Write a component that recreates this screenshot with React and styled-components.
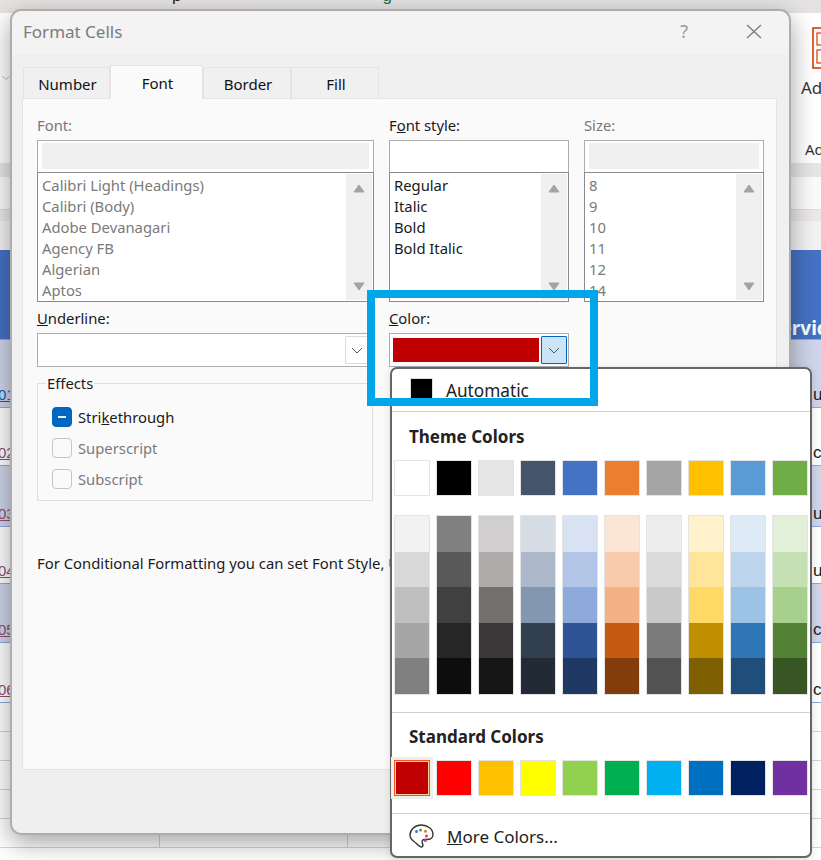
import React from 'react';
import styled, { createGlobalStyle } from 'styled-components';

const GlobalStyle = createGlobalStyle`
  html, body { margin: 0; padding: 0; background: #fff; }
  * { box-sizing: border-box; }
`;

const UI_FONT = `"Noto Sans", "Open Sans", sans-serif`;

const themeTop = ['#ffffff', '#000000', '#e7e6e6', '#44546a', '#4472c4', '#ed7d31', '#a5a5a5', '#ffc000', '#5b9bd5', '#70ad47'];
const themeShades = [
  ['#f2f2f2', '#d9d9d9', '#bfbfbf', '#a6a6a6', '#808080'],
  ['#808080', '#595959', '#404040', '#262626', '#0d0d0d'],
  ['#d0cece', '#aeabab', '#757070', '#3a3838', '#171616'],
  ['#d6dce4', '#adb9ca', '#8497b0', '#323f4f', '#222b35'],
  ['#d9e2f3', '#b4c6e7', '#8eaadb', '#2f5496', '#1f3864'],
  ['#fbe5d5', '#f7cbac', '#f4b183', '#c55a11', '#833c0b'],
  ['#ededed', '#dbdbdb', '#c9c9c9', '#7b7b7b', '#525252'],
  ['#fff2cc', '#fee599', '#ffd965', '#bf8f00', '#7f6000'],
  ['#deeaf6', '#bdd6ee', '#9cc3e5', '#2e75b5', '#1e4e79'],
  ['#e2efd9', '#c5e0b3', '#a8d08d', '#538135', '#375623'],
];
const standard = ['#c00000', '#ff0000', '#ffc000', '#ffff00', '#92d050', '#00b050', '#00b0f0', '#0070c0', '#002060', '#7030a0'];

const tableRows = [
  { h: 68, left: '01', right: 'u', shaded: true, visited: false },
  { h: 58, left: '02', right: 'c', shaded: false, visited: true },
  { h: 61, left: '03', right: 'u', shaded: true, visited: true },
  { h: 57, left: '04', right: 'u', shaded: false, visited: true },
  { h: 59, left: '05', right: 'c', shaded: true, visited: true },
  { h: 60, left: '06', right: 'c', shaded: false, visited: true },
];

const Page = styled.div`
  position: relative;
  width: 821px;
  height: 860px;
  overflow: hidden;
  font-family: ${UI_FONT};
  background: #fff;
`;

/* the workbook behind the dialog */
const Sheet = styled.div`
  display: flex;
  flex-direction: column;
  height: 860px;
`;

const TopStrip = styled.div`
  display: flex;
  height: 13px;
  overflow: hidden;
  background: linear-gradient(90deg, #e6e3e1, #e4e2e4);
  font-family: "Liberation Sans", sans-serif;
  font-size: 17px;
  line-height: 20px;
`;

const CutText = styled.span`
  margin-top: -14px;
  margin-left: ${p => p.$left}px;
  color: ${p => p.$color};
`;

const Ribbon = styled.div`
  display: flex;
  justify-content: space-between;
  height: 150px;
  background: #fff;
`;

const RibbonChevron = styled.svg`
  margin: 62px 0 0 2px;
  width: 8px;
  height: 6px;
`;

const RibbonTool = styled.div`
  display: flex;
  flex-direction: column;
  width: 20px;
  padding-top: 14px;
  font-size: 17px;
  line-height: 22px;
  color: #333;
  overflow: hidden;
`;

const RibbonIcon = styled.svg`
  margin-left: 11px;
  width: 9px;
  height: 42px;
  flex: none;
`;

const RibbonCaption = styled.span`
  margin-top: ${p => p.$top}px;
  padding-left: ${p => p.$indent}px;
  font-size: ${p => p.$size}px;
  white-space: nowrap;
`;

const Band = styled.div`
  height: ${p => p.$h}px;
  background: ${p => p.$bg};
  border-bottom: ${p => p.$line ? `1px solid ${p.$line}` : 'none'};
`;

const HeaderRow = styled.div`
  display: flex;
  justify-content: flex-end;
  align-items: flex-end;
  height: 90px;
  background: #4472c4;
  border-bottom: 1px solid #8eaadb;
`;

const HeaderText = styled.div`
  width: 51px;
  font-size: 19px;
  line-height: 22px;
  font-weight: 700;
  color: #fff;
  white-space: nowrap;
`;

const TableRow = styled.div`
  display: flex;
  justify-content: space-between;
  align-items: flex-end;
  height: ${p => p.$h}px;
  padding-bottom: 2px;
  background: ${p => p.$shaded ? '#cfd5ea' : '#fff'};
  border-bottom: 1px solid #8eaadb;
  font-family: "Liberation Sans", sans-serif;
  font-size: 15px;
  line-height: 20px;
`;

const LinkText = styled.span`
  margin-left: -2px;
  color: ${p => p.$visited ? '#954f72' : '#0563c1'};
  text-decoration: underline;
`;

const RowEnd = styled.span`
  width: 8px;
  font-size: 17px;
  color: #222;
  overflow: hidden;
`;

const GridRow = styled.div`
  display: grid;
  grid-template-columns: 160px 188px 1fr;
  height: 29px;
  border-bottom: 1px solid #d4d4d4;
`;

const GridCell = styled.div`
  border-right: 1px solid #d4d4d4;
`;

/* dialog window */
const Dialog = styled.div`
  position: absolute;
  left: 10px;
  top: 9px;
  width: 781px;
  height: 826px;
  display: flex;
  flex-direction: column;
  border: 2px solid #adadad;
  border-radius: 11px;
  background: linear-gradient(180deg, #f3f3f3 0, #f3f3f3 43px, #f0f0f0 43px, #efefef 100%);
  box-shadow: 0 8px 26px rgba(0, 0, 0, 0.36);
  color: #1a1a1a;
`;

const TitleBar = styled.div`
  display: flex;
  align-items: center;
  height: 43px;
  padding: 0 27px 3px 11px;
`;

const Title = styled.div`
  flex: 1;
  font-size: 17px;
  color: #7b7b7b;
`;

const HelpMark = styled.span`
  margin-right: 58px;
  font-size: 18px;
  color: #9a9a9a;
`;

const CloseIcon = styled.svg`
  width: 16px;
  height: 15px;
`;

const DialogBody = styled.div`
  display: flex;
  flex-direction: column;
  padding: 11px 12px 0 10px;
`;

const TabStrip = styled.div`
  display: flex;
  align-items: flex-end;
  height: 34px;
  margin-bottom: -1px;
  padding-left: 1px;
  position: relative;
  z-index: 1;
`;

const Tab = styled.div`
  display: flex;
  align-items: center;
  justify-content: center;
  width: ${p => p.$w}px;
  height: ${p => p.$active ? 34 : 32}px;
  padding: 1px 0 0 2px;
  font-size: 15px;
  color: #111;
  background: ${p => p.$active ? '#fafafa' : '#f0f0f0'};
  border: 1px solid #e4e4e4;
  border-bottom: ${p => p.$active ? '1px solid #fafafa' : '1px solid #e4e4e4'};
`;

const Panel = styled.div`
  height: 672px;
  padding: 16px 0 0 14px;
  background: #fafafa;
  border: 1px solid #e4e4e4;
  overflow: hidden;
`;

const FieldGrid = styled.div`
  display: grid;
  grid-template-columns: 337px 180px 180px;
  column-gap: 15px;
`;

const Label = styled.div`
  height: ${p => p.$h || 25}px;
  font-size: 14.8px;
  line-height: 20px;
  color: ${p => p.$muted ? '#777' : '#1a1a1a'};
  white-space: nowrap;
`;

const Key = styled.span`
  text-decoration: underline;
`;

const FieldBlock = styled.div`
  display: flex;
  flex-direction: column;
`;

const InputBox = styled.div`
  height: 32px;
  padding: 2px 4px;
  background: #fff;
  border: 1px solid #adadad;
  border-bottom: 0;
`;

const InputFill = styled.div`
  height: 26px;
  background: ${p => p.$disabled ? '#f0f0f0' : '#fff'};
`;

const ListBox = styled.div`
  display: flex;
  height: 130px;
  padding: 1px 1px 1px 4px;
  background: #fff;
  border: 1px solid #8a8a94;
`;

const ListItems = styled.div`
  flex: 1;
  padding-top: 1px;
  overflow: hidden;
`;

const ListItem = styled.div`
  font-size: 14.8px;
  line-height: 21px;
  color: ${p => p.$muted ? '#7a7a7a' : '#1a1a1a'};
  white-space: nowrap;
`;

const ScrollTrack = styled.div`
  display: flex;
  flex-direction: column;
  align-items: center;
  justify-content: space-between;
  width: 26px;
  padding: 10px 0 9px;
  background: #f0f0f0;
`;

const ScrollArrow = styled.svg`
  width: 12px;
  height: 9px;
`;

const SecondRow = styled(FieldGrid)`
  margin-top: 6px;
`;

const ComboBox = styled.div`
  display: flex;
  align-items: center;
  justify-content: flex-end;
  height: 34px;
  padding: 0 1px 0 3px;
  width: ${p => p.$w}px;
  background: #fff;
  border: 1px solid #adadad;
`;

const ColorBar = styled.div`
  flex: 1;
  height: 24px;
  margin-right: 2px;
  background: #c00000;
`;

const ComboButton = styled.div`
  display: flex;
  align-items: center;
  justify-content: center;
  width: ${p => p.$w}px;
  height: 28px;
  background: ${p => p.$active ? '#cce4f7' : '#fff'};
  border: 1px solid ${p => p.$active ? '#0067c0' : '#dcdcdc'};
  border-radius: 1px;
`;

const ChevronIcon = styled.svg`
  width: 12px;
  height: 7px;
`;

const Effects = styled.fieldset`
  width: 336px;
  margin: 7px 0 0;
  padding: 9px 0 6px 14px;
  border: 1px solid #dedede;
  min-inline-size: 0;
`;

const EffectsLegend = styled.legend`
  margin-left: -6px;
  padding: 0 1px;
  font-size: 14.8px;
  line-height: 18px;
`;

const CheckRow = styled.div`
  display: flex;
  align-items: center;
  gap: 6px;
  height: 31px;
  font-size: 14.8px;
  color: ${p => p.$muted ? '#7a7a7a' : '#1a1a1a'};
`;

const CheckBox = styled.div`
  display: flex;
  align-items: center;
  justify-content: center;
  width: 20px;
  height: 20px;
  border-radius: 4px;
  background: ${p => p.$on ? '#0067c0' : 'transparent'};
  border: 1px solid ${p => p.$on ? '#0067c0' : '#c4c4c4'};
`;

const CheckDash = styled.div`
  width: 8px;
  height: 2px;
  background: #fff;
  opacity: 0.9;
`;

const Note = styled.div`
  margin-top: 52px;
  font-size: 14.85px;
  line-height: 20px;
  white-space: nowrap;
`;

/* colour popup, opened over the dialog */
const Popup = styled.div`
  position: absolute;
  left: 390px;
  top: 367px;
  width: 422px;
  height: 491px;
  display: flex;
  flex-direction: column;
  background: #fff;
  border: 2px solid #666;
  border-radius: 7px;
  box-shadow: 0 2px 8px rgba(0, 0, 0, 0.12);
  color: #222;
`;

const AutoRow = styled.div`
  display: flex;
  align-items: center;
  flex: none;
  height: 43px;
  padding-left: 18px;
  gap: 13px;
  font-size: 17.2px;
  border-bottom: 1px solid #d0d0d0;
`;

const AutoSwatch = styled.div`
  width: 23px;
  height: 24px;
  background: #000;
  border: 1px solid #ddd;
`;

const SectionTitle = styled.div`
  padding-left: 17px;
  margin-top: ${p => p.$top}px;
  font-size: 17px;
  line-height: 22px;
  font-weight: 700;
  color: #222;
`;

const SwatchRow = styled.div`
  display: grid;
  grid-template-columns: repeat(10, 36px);
  column-gap: 6px;
  margin-top: ${p => p.$top}px;
  padding-left: 2px;
`;

const Swatch = styled.div`
  width: 36px;
  height: 36px;
  background: ${p => p.$color};
  border: 1px solid #e3e3e3;
`;

const SelectedSwatch = styled.div`
  width: 36px;
  height: 36px;
  background: ${p => p.$color};
  border: 1px solid #f0561d;
  box-shadow: inset 0 0 0 1px #ffd58f;
  outline: 3px solid #eee;
`;

const ShadeColumn = styled.div`
  width: 36px;
  height: 180px;
  display: flex;
  flex-direction: column;
  border: 1px solid #e3e3e3;
`;

const Shade = styled.div`
  flex: 1;
  background: ${p => p.$color};
`;

const Divider = styled.div`
  flex: none;
  height: 1px;
  background: #d0d0d0;
  margin-top: ${p => p.$top}px;
`;

const MoreRow = styled.div`
  display: flex;
  align-items: center;
  gap: 13px;
  height: 44px;
  padding: 2px 0 0 17px;
  font-size: 17px;
`;

const PaletteIcon = styled.svg`
  width: 25px;
  height: 24px;
`;

/* blue annotation box drawn on the screenshot */
const Callout = styled.div`
  position: absolute;
  left: 367px;
  top: 290px;
  width: 231px;
  height: 116px;
  border: 8px solid #00a6e8;
  pointer-events: none;
`;

const Arrow = ({ up }) => (
  <ScrollArrow viewBox="0 0 12 9">
    <path d={up ? 'M6 1 L11 8 H1 Z' : 'M6 8 L11 1 H1 Z'} fill="#a3a3a3" stroke="#a3a3a3" strokeLinejoin="round" />
  </ScrollArrow>
);

const Chevron = () => (
  <ChevronIcon viewBox="0 0 12 7">
    <path d="M1 1 L6 6 L11 1" fill="none" stroke="#555" strokeWidth="1" />
  </ChevronIcon>
);

const FontList = ({ label, items, disabled }) => (
  <FieldBlock>
    <Label $muted={disabled}>{label}</Label>
    <InputBox><InputFill $disabled={disabled} /></InputBox>
    <ListBox>
      <ListItems>
        {items.map(item => <ListItem key={item} $muted={disabled}>{item}</ListItem>)}
      </ListItems>
      <ScrollTrack>
        <Arrow up />
        <Arrow />
      </ScrollTrack>
    </ListBox>
  </FieldBlock>
);

export default function App() {
  return (
    <Page>
      <GlobalStyle />
      <Sheet>
        <TopStrip>
          <CutText $left={172} $color="#222">p</CutText>
          <CutText $left={201} $color="#1e7145">g</CutText>
        </TopStrip>
        <Ribbon>
          <RibbonChevron viewBox="0 0 8 6">
            <path d="M0.5 1 L4 4.5 L7.5 1" fill="none" stroke="#bbb" strokeWidth="1" />
          </RibbonChevron>
          <RibbonTool>
            <RibbonIcon viewBox="0 0 9 42">
              <rect x="1" y="1" width="12" height="40" fill="#fff" stroke="#d83b01" strokeWidth="1.6" />
              <rect x="5" y="6" width="8" height="12" fill="#fff" stroke="#d83b01" strokeWidth="1.2" />
              <rect x="5" y="23" width="8" height="13" fill="#fff" stroke="#d83b01" strokeWidth="1.2" />
            </RibbonIcon>
            <RibbonCaption $top={8} $indent={0} $size={17}>Ad</RibbonCaption>
            <RibbonCaption $top={39} $indent={4} $size={15}>Ad</RibbonCaption>
          </RibbonTool>
        </Ribbon>
        <Band $h={14} $bg="#e8e6e5" />
        <Band $h={33} $bg="#fbfbfb" $line="#dcdcdc" />
        <Band $h={11} $bg="#ebe8e7" />
        <Band $h={29} $bg="#f3f3f3" />
        <HeaderRow><HeaderText>Servic</HeaderText></HeaderRow>
        {tableRows.map(row => (
          <TableRow key={row.left} $h={row.h} $shaded={row.shaded}>
            <LinkText $visited={row.visited}>{row.left}</LinkText>
            <RowEnd>{row.right}</RowEnd>
          </TableRow>
        ))}
        {[0, 1, 2, 3, 4].map(n => (
          <GridRow key={n}>
            <GridCell />
            <GridCell />
          </GridRow>
        ))}
      </Sheet>

      <Dialog>
        <TitleBar>
          <Title>Format Cells</Title>
          <HelpMark>?</HelpMark>
          <CloseIcon viewBox="0 0 16 15">
            <path d="M1 1 L15 14 M15 1 L1 14" stroke="#777" strokeWidth="1.2" fill="none" />
          </CloseIcon>
        </TitleBar>
        <DialogBody>
          <TabStrip>
            <Tab $w={87}>Number</Tab>
            <Tab $w={93} $active>Font</Tab>
            <Tab $w={88}>Border</Tab>
            <Tab $w={88}>Fill</Tab>
          </TabStrip>
          <Panel>
            <FieldGrid>
              <FontList
                label="Font:"
                disabled
                items={['Calibri Light (Headings)', 'Calibri (Body)', 'Adobe Devanagari', 'Agency FB', 'Algerian', 'Aptos']}
              />
              <FontList
                label={<>F<Key>o</Key>nt style:</>}
                items={['Regular', 'Italic', 'Bold', 'Bold Italic']}
              />
              <FontList
                label="Size:"
                disabled
                items={['8', '9', '10', '11', '12', '14']}
              />
            </FieldGrid>
            <SecondRow>
              <FieldBlock>
                <Label><Key>U</Key>nderline:</Label>
                <ComboBox $w={333}>
                  <ComboButton $w={23}><Chevron /></ComboButton>
                </ComboBox>
                <Effects>
                  <EffectsLegend>Effects</EffectsLegend>
                  <CheckRow>
                    <CheckBox $on><CheckDash /></CheckBox>
                    <span>Stri<Key>k</Key>ethrough</span>
                  </CheckRow>
                  <CheckRow $muted>
                    <CheckBox />
                    <span>Superscript</span>
                  </CheckRow>
                  <CheckRow $muted>
                    <CheckBox />
                    <span>Subscript</span>
                  </CheckRow>
                </Effects>
              </FieldBlock>
              <FieldBlock>
                <Label><Key>C</Key>olor:</Label>
                <ComboBox $w={180}>
                  <ColorBar />
                  <ComboButton $w={26} $active><Chevron /></ComboButton>
                </ComboBox>
              </FieldBlock>
            </SecondRow>
            <Note>For Conditional Formatting you can set Font Style, Underline, Color, and Strikethrough.</Note>
          </Panel>
        </DialogBody>
      </Dialog>

      <Popup>
        <AutoRow>
          <AutoSwatch />
          <span>Automatic</span>
        </AutoRow>
        <SectionTitle $top={14}>Theme Colors</SectionTitle>
        <SwatchRow $top={12}>
          {themeTop.map(color => <Swatch key={color} $color={color} />)}
        </SwatchRow>
        <SwatchRow $top={19}>
          {themeShades.map(col => (
            <ShadeColumn key={col[0] + col[4]}>
              {col.map(color => <Shade key={color} $color={color} />)}
            </ShadeColumn>
          ))}
        </SwatchRow>
        <Divider $top={17} />
        <SectionTitle $top={13}>Standard Colors</SectionTitle>
        <SwatchRow $top={12}>
          {standard.map((color, i) =>
            i === 0
              ? <SelectedSwatch key={color} $color={color} />
              : <Swatch key={color} $color={color} />
          )}
        </SwatchRow>
        <Divider $top={17} />
        <MoreRow>
          <PaletteIcon viewBox="0 0 25 24">
            <path
              d="M12.5 1C6 1 1 5.5 1 11c0 3 1.800 5 4 6.500 2.500 1.700 5 5.500 7.500 5.500 2.200 0 1.500-2.500 .8-4-.8-1.800 .2-3.500 2.200-3.500h2.500c3.500 0 6-2 6-5C24 5 18.500 1 12.500 1z"
              fill="none"
              stroke="#333"
              strokeWidth="1.4"
            />
            <circle cx="7.500" cy="7.500" r="1.500" fill="#2b7cd3" />
            <circle cx="11.500" cy="6" r="1.500" fill="#3fa34d" />
            <circle cx="16.500" cy="7.300" r="1.500" fill="#e8792b" />
            <circle cx="17.500" cy="12" r="1.500" fill="#e0404a" />
            <circle cx="16.300" cy="16.500" r="1.500" fill="#9b4fb0" />
          </PaletteIcon>
          <span><Key>M</Key>ore Colors...</span>
        </MoreRow>
      </Popup>

      <Callout />
    </Page>
  );
}
